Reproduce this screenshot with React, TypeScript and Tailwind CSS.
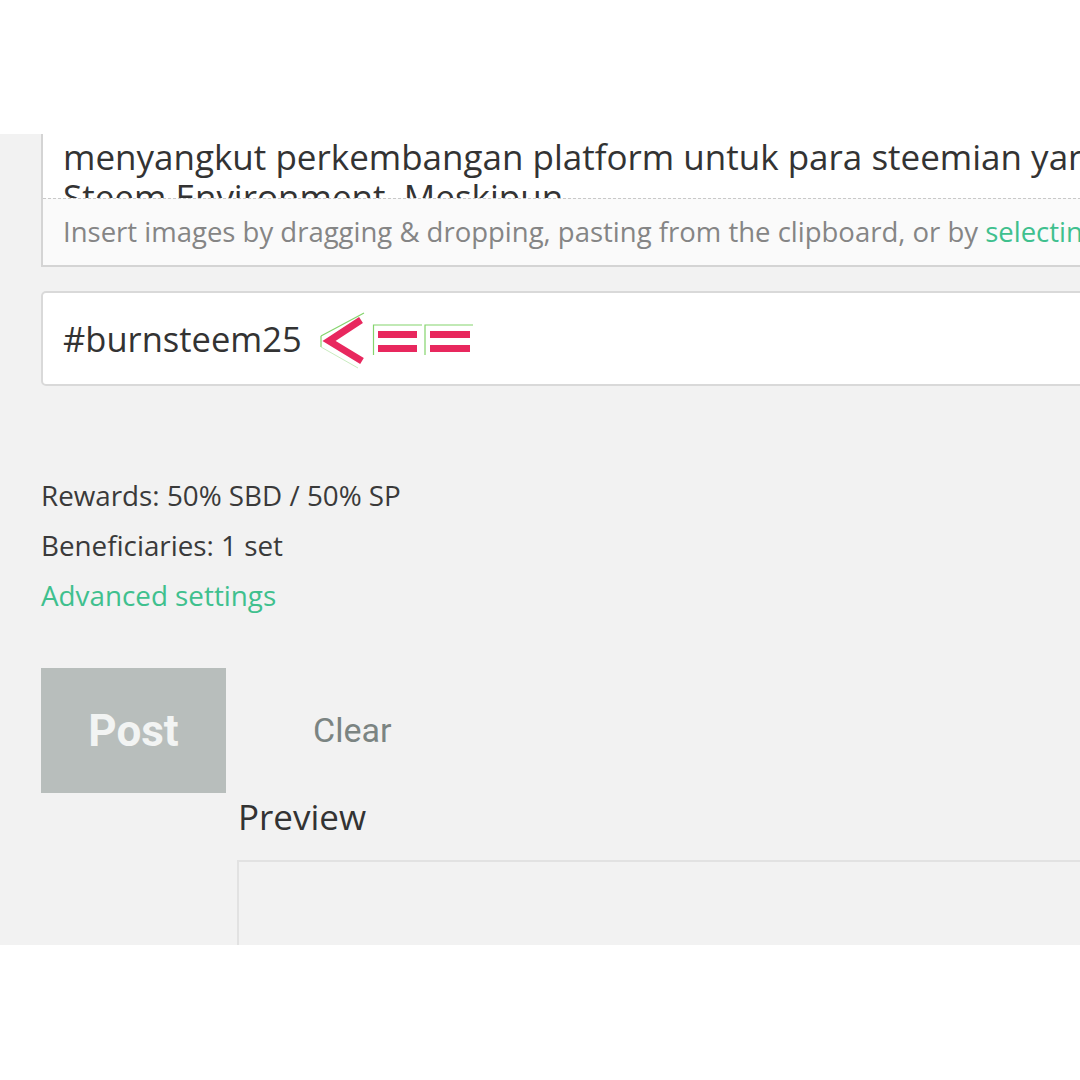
import React from "react";

function Arrow() {
  return (
    <svg width="160" height="62" viewBox="316 308 160 62" className="ml-[14px] shrink-0">
      <line x1="321" y1="336" x2="364" y2="313" stroke="#84d46c" strokeWidth="1.2" />
      <line x1="321" y1="336" x2="321" y2="347" stroke="#84d46c" strokeWidth="1.2" />
      <line x1="321" y1="347" x2="358" y2="368" stroke="#c9ecc0" strokeWidth="1" />
      <polyline
        points="361,320 329,341 362,361"
        fill="none"
        stroke="#e8285e"
        strokeWidth="7"
        strokeLinejoin="miter"
        strokeMiterlimit={10}
      />
      <path d="M373.5 355 V325 H422" fill="none" stroke="#84d46c" strokeWidth="1.2" />
      <path d="M425 355 V325 H473" fill="none" stroke="#84d46c" strokeWidth="1.2" />
      <rect x="378" y="331" width="39" height="7" fill="#e8285e" />
      <rect x="378" y="345" width="39" height="7" fill="#e8285e" />
      <rect x="430" y="331" width="40" height="7" fill="#e8285e" />
      <rect x="430" y="345" width="40" height="7" fill="#e8285e" />
    </svg>
  );
}

export default function App() {
  return (
    <div className="w-[1080px] h-[1080px] bg-white overflow-hidden" style={{ fontFamily: '"Open Sans", "Noto Sans", sans-serif' }}>
      <div className="h-[134px]" />
      <div className="h-[811px] bg-[#f2f2f2] overflow-hidden pl-[41px]">
        <div className="w-[1100px] bg-white border-l-2 border-b-2 border-[#d4d4d4]">
          <div className="h-[64px] overflow-hidden pl-[20px] text-[35px] leading-[46px] text-[#333333] whitespace-nowrap">
            <div>menyangkut perkembangan platform untuk para steemian yang</div>
            <div className="-mt-[6px]">Steem Environment. Meskipun</div>
          </div>
          <div className="h-[67px] border-t border-dashed border-[#c9c9c9] bg-[#fafafa] pl-[20px] text-[27.5px] text-[#858585] flex items-center whitespace-nowrap">
            <span>
              Insert images by dragging &amp; dropping, pasting from the clipboard, or by{" "}
              <span className="text-[#3fc08e]">selecting them.</span>
            </span>
          </div>
        </div>

        <div className="mt-[24px] w-[1100px] h-[95px] border-2 border-[#d9d9d9] rounded-[5px] bg-white pl-[20px] flex items-center">
          <span className="text-[34.5px] text-[#333333]">#burnsteem25</span>
          <Arrow />
        </div>

        <div className="mt-[84px] text-[27.8px] leading-[50px] text-[#3a3a3a]">
          <div>Rewards: 50% SBD / 50% SP</div>
          <div>Beneficiaries: 1 set</div>
          <div className="text-[#3fc08e]">Advanced settings</div>
        </div>

        <div className="mt-[48px] flex">
          <div
            className="w-[185px] h-[125px] bg-[#b8bebc] flex items-center justify-center text-[44px] font-bold text-[#f2f4f3] shrink-0"
            style={{ fontFamily: "Roboto, sans-serif" }}
          >
            Post
          </div>
          <div className="ml-[11px] flex flex-col">
            <div
              className="h-[125px] flex items-center pl-[76px] text-[34px] text-[#7b8482]"
              style={{ fontFamily: "Roboto, sans-serif" }}
            >
              Clear
            </div>
            <div className="h-[67px] flex items-center pb-[18px] pl-[1px] text-[35px] text-[#333333]">Preview</div>
            <div className="w-[900px] h-[200px] border-l-2 border-t-2 border-[#e2e2e2]" />
          </div>
        </div>
      </div>
    </div>
  );
}
